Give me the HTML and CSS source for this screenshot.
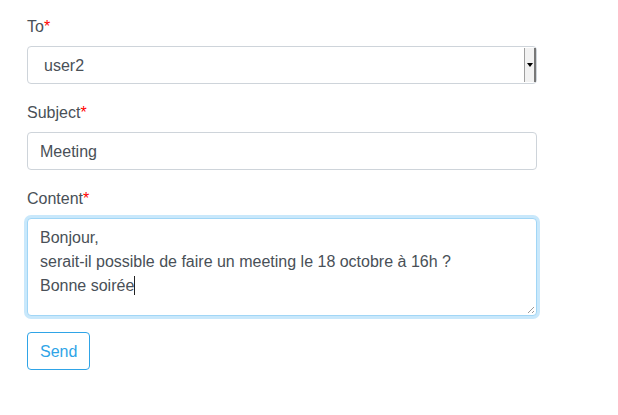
FILE: index.html
```html
<!DOCTYPE html>
<html>
<head>
<meta charset="utf-8">
<link rel="stylesheet" href="styles.css">
</head>
<body>
<form class="form">
  <div class="group">
    <label class="label">To<span class="req">*</span></label>
    <div class="select">
      <span class="select-value">user2</span>
      <span class="select-btn"><span class="arrow"></span></span>
    </div>
  </div>
  <div class="group">
    <label class="label">Subject<span class="req">*</span></label>
    <div class="input">Meeting</div>
  </div>
  <div class="group">
    <label class="label">Content<span class="req">*</span></label>
    <div class="textarea focus">Bonjour,<br>serait-il possible de faire un meeting le 18 octobre à 16h ?<br>Bonne soirée<span class="caret"></span><span class="grip"></span></div>
  </div>
  <button type="button" class="btn">Send</button>
</form>
</body>
</html>
```
FILE: styles.css
```css
html, body { margin: 0; padding: 0; background: #fff; }
body {
  font-family: "Liberation Sans", Arial, sans-serif;
  font-size: 16px;
  line-height: 24px;
  color: #495057;
}
.form { width: 510px; padding: 14px 0 0 27px; }
.group { margin-bottom: 16px; display: flex; flex-direction: column; }
.label { display: block; padding-top: 1px; margin-bottom: 7px; color: #495057; }
.req { color: #f00; }
.select, .input, .textarea {
  box-sizing: border-box;
  width: 510px;
  border: 1px solid #ced4da;
  border-radius: 4px;
  background: #fff;
}
.select {
  height: 38px;
  display: flex;
  align-items: stretch;
  padding: 0 0 0 16px;
}
.select-value { flex: 1; padding-top: 2px; line-height: 34px; }
.select-btn {
  width: 9px;
  margin: 1px 0 1px 0;
  background: #f2f2f2;
  border-left: 1px solid #a0a0a0;
  border-right: 2px solid #777;
  display: flex;
  align-items: center;
  justify-content: center;
}
.arrow {
  width: 0; height: 0;
  border-left: 3px solid transparent;
  border-right: 3px solid transparent;
  border-top: 4px solid #000;
}
.input { height: 38px; padding: 7px 12px 5px; }
.textarea {
  height: 98px;
  padding: 7px 12px 5px;
  position: relative;
}
.focus {
  border-color: #a1d6f6;
  box-shadow: 0 0 0 3px #c9e8fb;
}
.caret {
  display: inline-block;
  width: 1px;
  height: 19px;
  background: #222;
  vertical-align: -4px;
}
.grip {
  position: absolute;
  right: 2px; bottom: 2px;
  width: 9px; height: 9px;
  background: repeating-linear-gradient(135deg, transparent 0 2px, #999 2px 3px);
  clip-path: polygon(100% 0, 100% 100%, 0 100%);
}
.btn {
  box-sizing: border-box;
  height: 38px;
  padding: 7px 12px 5px;
  font: inherit;
  color: #2fa4e7;
  background: #fff;
  border: 1px solid #2fa4e7;
  border-radius: 4px;
}
```
